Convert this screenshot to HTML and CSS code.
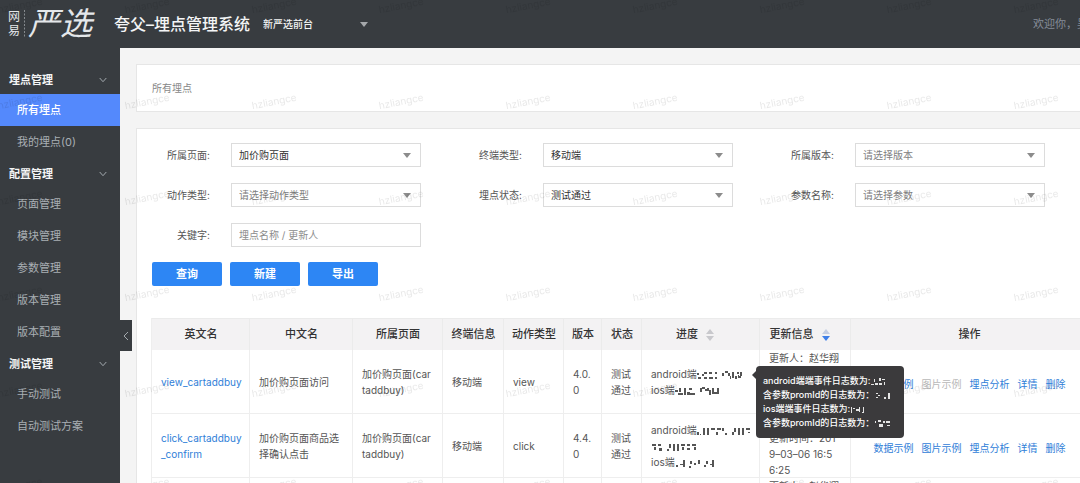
FILE: index.html
```html
<!DOCTYPE html>
<html lang="zh-CN">
<head>
<meta charset="utf-8">
<title>夸父-埋点管理系统</title>
<link rel="stylesheet" href="styles.css">
</head>
<body>
<div class="app">
  <header class="topbar">
    <div class="logo">
      <span class="logo-side">网易</span>
      <svg class="logo-rule" viewBox="0 0 3 30"><path d="M1.5 1v28" stroke="#b9bec2" stroke-dasharray="2 1.5" opacity=".6"/></svg>
      <span class="logo-main">严选</span>
    </div>
    <h1 class="title">夸父–埋点管理系统</h1>
    <div class="picker picker-dark">
      <select aria-label="产品"><option>新严选前台</option></select>
    </div>
    <span class="welcome">欢迎你，吴</span>
  </header>

  <div class="body">
    <nav class="sidebar">
      <button class="group" type="button">埋点管理<svg viewBox="0 0 8 6"><path d="M.7 1 4 4.7 7.3 1"/></svg></button>
      <a class="item active" href="#all">所有埋点</a>
      <a class="item" href="#mine">我的埋点(0)</a>
      <button class="group" type="button">配置管理<svg viewBox="0 0 8 6"><path d="M.7 1 4 4.7 7.3 1"/></svg></button>
      <a class="item" href="#page">页面管理</a>
      <a class="item" href="#module">模块管理</a>
      <a class="item" href="#param">参数管理</a>
      <a class="item" href="#version">版本管理</a>
      <a class="item" href="#config">版本配置</a>
      <button class="group" type="button">测试管理<svg viewBox="0 0 8 6"><path d="M.7 1 4 4.7 7.3 1"/></svg></button>
      <a class="item" href="#manual">手动测试</a>
      <a class="item" href="#auto">自动测试方案</a>
      <button class="collapse" type="button" aria-label="收起"><svg viewBox="0 0 6 10"><path d="M5 1 1 5l4 4"/></svg></button>
    </nav>

    <main class="main">
      <div class="panel crumb">所有埋点</div>
      <section class="panel content">
        <form class="filters">
          <div class="field"><label for="f1">所属页面:</label><div class="picker"><select id="f1"><option>加价购页面</option></select></div></div>
          <div class="field"><label for="f2">终端类型:</label><div class="picker"><select id="f2"><option>移动端</option></select></div></div>
          <div class="field"><label for="f3">所属版本:</label><div class="picker"><select id="f3" class="empty"><option>请选择版本</option></select></div></div>
          <div class="field"><label for="f4">动作类型:</label><div class="picker"><select id="f4" class="empty"><option>请选择动作类型</option></select></div></div>
          <div class="field"><label for="f5">埋点状态:</label><div class="picker"><select id="f5"><option>测试通过</option></select></div></div>
          <div class="field"><label for="f6">参数名称:</label><div class="picker"><select id="f6" class="empty"><option>请选择参数</option></select></div></div>
          <div class="field"><label for="f7">关键字:</label><input id="f7" type="text" placeholder="埋点名称 / 更新人"></div>
        </form>
        <div class="actions">
          <button type="button">查询</button>
          <button type="button">新建</button>
          <button type="button">导出</button>
        </div>

        <table class="grid">
          <colgroup>
            <col class="c-name"><col class="c-cn"><col class="c-page"><col class="c-term"><col class="c-act">
            <col class="c-ver"><col class="c-state"><col class="c-prog"><col class="c-upd"><col class="c-op">
          </colgroup>
          <thead>
            <tr>
              <th>英文名</th><th>中文名</th><th>所属页面</th><th>终端信息</th><th>动作类型</th><th>版本</th><th>状态</th>
              <th>进度<svg class="sort" viewBox="0 0 8 12"><path d="M4 0 8 5H0z" fill="#c8c8cc"/><path d="M4 12 0 7h8z" fill="#c8c8cc"/></svg></th>
              <th>更新信息<svg class="sort" viewBox="0 0 8 12"><path d="M4 0 8 5H0z" fill="#c3cde2"/><path d="M4 12 0 7h8z" fill="#3f7fe8"/></svg></th>
              <th>操作</th>
            </tr>
          </thead>
          <tbody>
            <tr>
              <td class="name"><a href="#view">view_cartaddbuy</a></td>
              <td>加价购页面访问</td>
              <td>加价购页面(car<wbr>taddbuy)</td>
              <td>移动端</td>
              <td>view</td>
              <td>4.0.<wbr>0</td>
              <td>测试通过</td>
              <td class="progress">
                android端<svg class="mask" width="46" height="12" viewBox="0 0 46 12"><path d="M0 4h2v2H0zM1 8h3v2H1zM5 5h2v2H5zM7 8h3v2H7zM7 3h3v2H7zM12 3h3v2h-3zM12 8h4v2h-4zM18 3h2v2h-2zM18 8h2v2h-2zM25 4h2v3h-2zM28 2h3v2h-3zM31 4h2v3h-2zM33 7h1v3h-1zM35 3h2v6h-2zM38 7h2v3h-2zM40 3h2v2h-2zM41 6h1v3h-1zM43 3h2v4h-2zM42 7h2v2h-2z"/></svg><br>ios端<svg class="mask" width="46" height="12" viewBox="0 0 46 12"><path d="M0 5h3v2H0zM4 3h2v4H4zM3 8h5v2H3zM9 3h2v7H9zM12 7h3v3h-3zM14 3h3v2h-3zM15 8h5v2h-5zM25 3h2v4h-2zM27 2h3v2h-3zM30 4h2v2h-2zM32 3h2v3h-2zM34 5h2v5h-2zM37 3h2v6h-2zM39 7h3v2h-3zM42 3h2v6h-2z"/></svg>
                <div class="tip" role="tooltip">
                  android端端事件日志数为:<svg class="mask" width="18" height="10" viewBox="0 0 18 10"><path d="M1 7h3v1H1zM4 2h1v3H4zM5 6h3v2H5zM9 1h2v3H9zM9 6h3v2H9zM12 2h3v1h-3zM14 5h1v3h-1z"/></svg><br>
                  含参数promId的日志数为：<svg class="mask" width="18" height="10" viewBox="0 0 18 10"><path d="M2 2h2v1H2zM4 4h2v1H4zM2 6h2v1H2zM10 6h2v2h-2zM14 2h2v6h-2z"/></svg><br>
                  ios端端事件日志数为:<svg class="mask" width="18" height="10" viewBox="0 0 18 10"><path d="M1 2h1v6H1zM3 3h2v1H3zM6 4h4v2H6zM9 2h1v5H9zM13 2h1v5h-1zM12 7h2v1h-2z"/></svg><br>
                  含参数promId的日志数为：<svg class="mask" width="18" height="10" viewBox="0 0 18 10"><path d="M1 2h1v2H1zM4 1h3v2H4zM5 5h4v3H5zM9 2h2v2H9zM12 2h4v2h-4zM13 6h3v1h-3z"/></svg>
                </div>
              </td>
              <td>更新人：赵华翔<br>更新时间：201<br>9–03–06 16:5<br>6:25</td>
              <td class="opcell"><div class="ops"><a href="#data">数据示例</a><a class="off">图片示例</a><a href="#an">埋点分析</a><a href="#d">详情</a><a href="#del">删除</a></div></td>
            </tr>
            <tr>
              <td class="name"><a href="#click">click_cartaddbuy<wbr>_confirm</a></td>
              <td>加价购页面商品选择确认点击</td>
              <td>加价购页面(car<wbr>taddbuy)</td>
              <td>移动端</td>
              <td>click</td>
              <td>4.4.<wbr>0</td>
              <td>测试通过</td>
              <td>android端<svg class="mask" width="54" height="12" viewBox="0 0 54 12"><path d="M0 7h2v3H0zM3 9h1v1H3zM6 3h2v7H6zM10 3h2v7h-2zM14 3h4v2h-4zM20 3h4v2h-4zM19 7h2v3h-2zM25 3h2v3h-2zM28 8h2v2h-2zM35 7h2v3h-2zM37 3h2v4h-2zM41 3h2v7h-2zM45 3h2v7h-2zM49 3h4v2h-4zM51 7h2v1h-2z"/></svg><br><svg class="mask" width="48" height="12" viewBox="0 0 48 12"><path d="M1 3h4v2H1zM3 6h2v3H3zM7 3h3v2H7zM8 7h3v3H8zM16 8h2v2h-2zM18 3h2v4h-2zM22 3h2v7h-2zM26 3h2v7h-2zM30 3h4v2h-4zM31 6h2v3h-2zM36 3h3v2h-3zM36 7h3v2h-3zM41 3h4v2h-4zM43 6h2v3h-2z"/></svg><br>ios端<svg class="mask" width="46" height="12" viewBox="0 0 46 12"><path d="M1 8h2v2H1zM5 7h3v1H5zM8 3h2v7H8zM15 4h2v3h-2zM14 9h2v2h-2zM19 6h2v2h-2zM23 3h2v4h-2zM29 8h2v2h-2zM31 4h2v3h-2zM35 7h2v1h-2zM37 3h2v7h-2z"/></svg></td>
              <td>更新人：赵华翔<br>更新时间：201<br>9–03–06 16:5<br>6:25</td>
              <td class="opcell"><div class="ops"><a href="#data">数据示例</a><a href="#pic">图片示例</a><a href="#an">埋点分析</a><a href="#d">详情</a><a href="#del">删除</a></div></td>
            </tr>
            <tr>
              <td class="name"></td><td></td><td></td><td></td><td></td><td></td><td></td><td></td>
              <td>更新人：赵华翔<br>更新时间：201<br>9–03–06 16:5<br>6:25</td>
              <td></td>
            </tr>
          </tbody>
        </table>
      </section>
    </main>
  </div>
</div>
<svg class="watermark" aria-hidden="true">
  <defs>
    <pattern id="wm" x="84" y="53" width="127" height="96" patternUnits="userSpaceOnUse">
      <text x="63" y="52" text-anchor="middle" transform="rotate(-11 63 48)">hzliangce</text>
    </pattern>
  </defs>
  <rect width="100%" height="100%" fill="url(#wm)"/>
</svg>
</body>
</html>
```
FILE: styles.css
```css
* { box-sizing: border-box; }

body {
  margin: 0;
  overflow-x: hidden;
  background: #f4f4f4;
  color: #555;
  font: 10px/16px Inter, "Noto Sans CJK SC", sans-serif;
}

button, select, input { font: inherit; color: inherit; }
a { color: #2f80d8; text-decoration: none; }

.app {
  display: flex;
  flex-direction: column;
  min-width: 1104px;
  min-height: 100vh;
}

/* Top bar */
.topbar {
  display: flex;
  align-items: center;
  height: 48px;
  padding: 0 16px 0 8px;
  background: #383c40;
  color: #f4f5f6;
}
.logo { display: flex; align-items: center; width: 106px; color: #e4e7ea; }
.logo-side {
  width: 13px;
  font: 12px/14px "Liberation Serif", "Noto Sans CJK SC", serif;
  word-break: break-all;
}
.logo-rule { width: 3px; height: 30px; margin: 0 2px; }
.logo-main { font-size: 32px; line-height: 40px; font-weight: 400; font-style: italic; white-space: nowrap; }
.title { margin: 0 12px 0 0; font-size: 16px; line-height: 24px; font-weight: 500; }
.welcome { margin-left: auto; font-size: 11px; color: #858c98; }

/* Side navigation */
.body { display: flex; flex: 1; }
.sidebar {
  position: relative;
  flex: none;
  width: 120px;
  padding-top: 16px;
  background: #383c40;
  font-size: 11px;
}
.group {
  display: flex;
  align-items: center;
  justify-content: space-between;
  width: 100%;
  height: 30px;
  padding: 2px 13px 0 9px;
  border: 0;
  background: none;
  color: #f4f5f6;
  font-weight: 700;
}
.group svg { width: 8px; height: 6px; }
.group path, .collapse path { fill: none; stroke: #a3a9ae; }
.item {
  display: flex;
  align-items: center;
  height: 32px;
  padding: 0 0 1px 17px;
  color: #a9afb4;
}
.item.active { background: #5489fc; color: #fff; font-weight: 500; }
.collapse {
  position: absolute;
  left: 100%;
  top: 272px;
  display: flex;
  align-items: center;
  justify-content: center;
  width: 12px;
  height: 31px;
  padding: 0;
  border: 0;
  background: #383c40;
}
.collapse svg { width: 6px; height: 10px; }

/* Panels */
.main {
  display: flex;
  flex: 1;
  flex-direction: column;
  gap: 16px;
  padding: 16px 0 0 16px;
}
.panel { border: 1px solid #e6e6e6; background: #fff; }
.crumb { padding: 15px; color: #888; }
.content { flex: 1; padding: 14px 15px 0; }

/* Filters */
.filters { display: grid; grid-template-columns: repeat(3, 1fr); row-gap: 16px; }
.field { display: flex; align-items: center; }
.field label { width: 79px; padding-right: 21px; text-align: right; color: #555; }
.field .picker, .field input { width: 190px; height: 24px; }
.field input { padding: 0 7px; border: 1px solid #dcdcdc; background: #fff; }
.field input::placeholder { color: #8c8c8c; }
.picker { position: relative; }
.picker select {
  appearance: none;
  width: 100%;
  height: 100%;
  padding: 0 20px 0 7px;
  border: 1px solid #dcdcdc;
  border-radius: 0;
  background: #fff;
  color: #333;
}
.picker select.empty { color: #808080; }
.picker::after {
  content: "";
  position: absolute;
  right: 10px;
  top: 50%;
  margin-top: -2px;
  border: 4px solid transparent;
  border-top: 5px solid #8c8c8c;
  border-bottom: 0;
  pointer-events: none;
}
.picker-dark { width: 116px; height: 24px; }
.picker-dark select {
  padding: 0 20px 0 1px;
  border: 0;
  background: none;
  color: #f4f5f6;
  font-weight: 500;
}
.picker-dark::after { border-top-color: #a5a8ab; }

.actions { display: flex; gap: 8px; margin-top: 15px; }
.actions button {
  width: 70px;
  height: 24px;
  padding: 0;
  border: 0;
  border-radius: 2px;
  background: #2d86f4;
  color: #fff;
  font-size: 11px;
  font-weight: 700;
}

/* Table; cell rules are inset shadows so rows keep whole line heights */
.grid {
  width: 100%;
  margin-top: 32px;
  border-spacing: 0;
  table-layout: fixed;
  box-shadow: -1px 0 0 #eee;
}
.c-name { width: 98px; }
.c-cn { width: 103px; }
.c-page { width: 90px; }
.c-term { width: 61px; }
.c-act { width: 60px; }
.c-ver { width: 38px; }
.c-state { width: 40px; }
.c-prog { width: 118px; }
.c-upd { width: 91px; }
.grid th {
  height: 32px;
  padding: 0;
  background: #f3f2f3;
  box-shadow: inset -1px 1px 0 #ebebeb;
  color: #333;
  font-size: 11px;
  font-weight: 500;
  white-space: nowrap;
}
.grid td {
  height: 64px;
  padding: 0 7px 0 9px;
  box-shadow: inset -1px -1px 0 #eee;
  vertical-align: middle;
}
.grid td.name { padding-right: 0; }
.grid td.opcell { padding: 3px 0 0; }
.sort { width: 8px; height: 12px; margin: 0 12px 0 8px; vertical-align: middle; }
.ops { display: flex; justify-content: center; gap: 8px; }
.ops .off { color: #b8b8b8; }
.mask { fill: #555; vertical-align: middle; }

.grid td.progress { position: relative; }
.tip {
  position: absolute;
  left: 114px;
  top: 16px;
  z-index: 2;
  width: 148px;
  padding: 8px 7px;
  border-radius: 4px;
  background: #3b3a3c;
  color: #fff;
  font-size: 9px;
  line-height: 14px;
  font-weight: 500;
  white-space: nowrap;
}
.tip .mask { fill: #e4e4e4; }
.tip::before {
  content: "";
  position: absolute;
  right: 100%;
  top: 5px;
  border: 4px solid transparent;
  border-right-color: #3b3a3c;
  border-left: 0;
}

.watermark {
  position: fixed;
  inset: 0;
  z-index: 1;
  width: 100%;
  height: 100%;
  pointer-events: none;
}
.watermark text { fill: #000; fill-opacity: .09; font-size: 10px; }
```
